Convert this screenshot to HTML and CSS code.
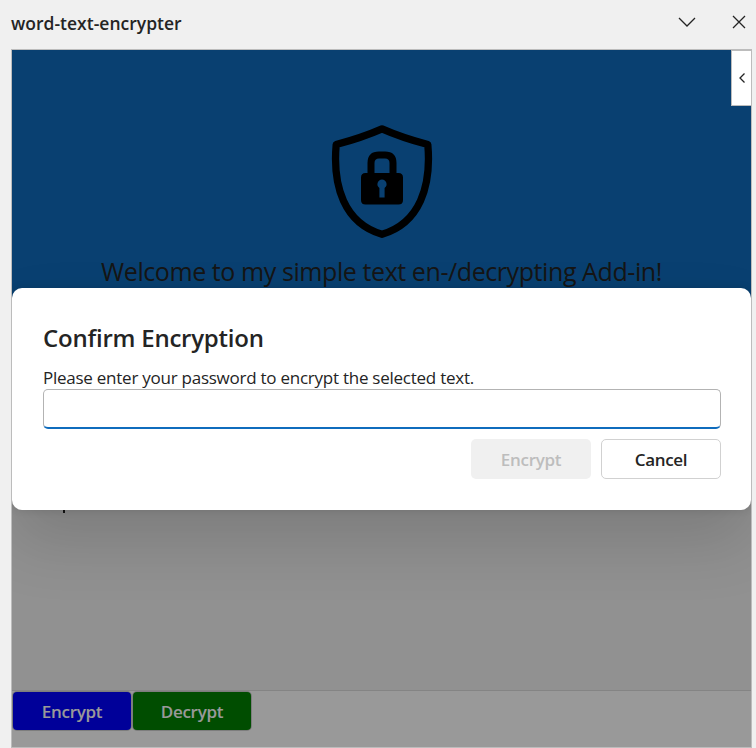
FILE: index.html
```html
<!DOCTYPE html>
<html lang="en">
<head>
<meta charset="utf-8">
<title>word-text-encrypter</title>
<link rel="stylesheet" href="styles.css">
</head>
<body>
<header class="titlebar">
  <span class="titlebar-name">word-text-encrypter</span>
  <svg class="chevron" width="18" height="10" viewBox="0 0 18 10"><path d="M1 1l8 8 8-8"/></svg>
  <svg class="close" width="14" height="14" viewBox="0 0 14 14"><path d="M1 1l12 12M13 1L1 13"/></svg>
</header>
<main class="pane">
  <section class="hero">
    <svg class="shield" width="102" height="114" viewBox="0 0 102 114">
      <path class="outline" d="M51 3.800C37 10 20 15.500 5.200 19.500C1.500 61 13 98 51 109.300C89 98 100.500 61 96.800 19.500C82 15.500 65 10 51 3.800Z"/>
      <path class="shackle" d="M40 51V38q0-8 8-8h6q8 0 8 8v13"/>
      <path class="lock" fill-rule="evenodd" d="M34.500 48h33q4.500 0 4.500 4.500v22.500q0 4.500-4.500 4.500h-33q-4.500 0-4.500-4.500v-22.500q0-4.500 4.500-4.500ZM51 54.500a4.700 4.700 0 0 0-2.600 8.500v9.500h5.200v-9.500A4.700 4.700 0 0 0 51 54.500Z"/>
    </svg>
    <h1 class="welcome">Welcome to my simple text en-/decrypting Add-in!</h1>
  </section>
  <section class="content"><div class="caret"></div></section>
  <footer class="actions">
    <button class="btn encrypt">Encrypt</button>
    <button class="btn decrypt">Decrypt</button>
  </footer>
  <div class="backdrop">
    <div class="dialog">
      <h2 class="dialog-title">Confirm Encryption</h2>
      <label class="prompt" for="password">Please enter your password to encrypt the selected text.</label>
      <div class="field"><input id="password" type="password"></div>
      <div class="dialog-actions">
        <button class="dialog-btn" disabled>Encrypt</button>
        <button class="dialog-btn cancel">Cancel</button>
      </div>
    </div>
  </div>
  <div class="handle"><svg width="8" height="12" viewBox="0 0 8 12"><path d="M6.500 1.500L2 6l4.500 4.500"/></svg></div>
</main>
</body>
</html>
```
FILE: styles.css
```css
* { box-sizing: border-box; }
body {
  margin: 0;
  height: 748px;
  display: flex;
  flex-direction: column;
  overflow: hidden;
  background: #f0f0f0;
  color: #242424;
  font-family: "Open Sans", "Noto Sans", sans-serif;
}
.titlebar {
  height: 49px;
  padding: 0 10px 3px 11px;
  display: flex;
  align-items: center;
}
.titlebar-name { flex: 1; font-size: 17.5px; font-weight: 600; letter-spacing: 0.01px; }
.titlebar svg, .handle svg { fill: none; stroke: #242424; stroke-width: 1.3; }
.titlebar svg { margin-bottom: 2px; }
.chevron { margin-right: 36px; }
.pane {
  position: relative;
  height: 699px;
  margin: 0 4px 0 11px;
  border: 1px solid #bcbcbc;
  display: flex;
  flex-direction: column;
}
.hero {
  height: 290px;
  padding-top: 75px;
  background: #0f6cbd;
  display: flex;
  flex-direction: column;
  align-items: center;
}
.shield { flex: none; }
.outline { fill: none; stroke: #000; stroke-width: 7.3; stroke-linejoin: round; }
.shackle { fill: none; stroke: #000; stroke-width: 7; }
.lock { fill: #000; }
.welcome {
  margin: 15px 0 0;
  font-size: 25px;
  line-height: 34px;
  font-weight: 400;
  letter-spacing: -0.42px;
  white-space: nowrap;
}
.content { flex: 1; background: #f2f2f2; padding: 166px 0 0 51px; }
.caret { width: 2px; height: 7px; background: #242424; }
.actions {
  height: 57px;
  padding: 1px;
  background: #fff;
  border-top: 1px solid #dcdcdc;
  display: flex;
  align-items: flex-start;
  gap: 2px;
}
.btn, .dialog-btn {
  border: 0;
  padding: 0;
  font-family: inherit;
  font-size: 17px;
  font-weight: 600;
  letter-spacing: -0.3px;
}
.btn { width: 118px; height: 38px; border-radius: 4px; color: #fff; box-shadow: 0 0 0 1px #d1d1d1; }
.encrypt { background: #00f; }
.decrypt { background: #008000; }
.backdrop {
  position: absolute;
  inset: 0;
  overflow: hidden;
  background: rgba(0, 0, 0, 0.4);
  display: flex;
  align-items: center;
}
.dialog {
  width: 100%;
  height: 222px;
  margin-top: 1px;
  padding: 31px 30px 31px 31px;
  border-radius: 10px;
  background: #fff;
  box-shadow: 0 0 8px rgba(0, 0, 0, 0.12), 0 32px 64px rgba(0, 0, 0, 0.14);
}
.dialog-title { margin: 0 0 10px; font-size: 24px; font-weight: 600; line-height: 38px; letter-spacing: -0.22px; }
.prompt { display: block; height: 22px; font-size: 17px; line-height: 22px; letter-spacing: -0.25px; white-space: nowrap; }
.field {
  height: 40px;
  border: 1px solid #b3b3b3;
  border-bottom: 2px solid #0f6cbd;
  border-radius: 5px;
}
.field input { width: 100%; height: 100%; border: 0; padding: 0 12px; background: transparent; outline: 0; }
.dialog-actions { margin-top: 10px; display: flex; justify-content: flex-end; gap: 10px; }
.dialog-btn { width: 120px; height: 40px; border-radius: 5px; background: #f0f0f0; color: #bdbdbd; }
.cancel { background: #fff; color: #242424; border: 1px solid #d1d1d1; }
.handle {
  position: absolute;
  top: 0;
  right: -1px;
  width: 21px;
  height: 56px;
  border: 1px solid #bcbcbc;
  background: #fff;
  display: flex;
  align-items: center;
  justify-content: center;
}
```
